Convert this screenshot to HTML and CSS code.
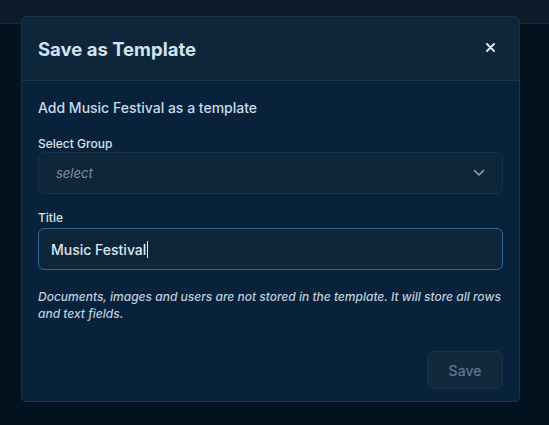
FILE: index.html
```html
<!DOCTYPE html>
<html>
<head>
<meta charset="utf-8">
<link rel="stylesheet" href="styles.css">
</head>
<body>
<div class="topbar"></div>
<div class="stage">
  <div class="modal">
    <div class="modal-header">
      <h2 class="modal-title">Save as Template</h2>
      <button class="close" aria-label="Close">
        <svg width="9" height="9" viewBox="0 0 9 9"><path d="M1 1L8 8M8 1L1 8" stroke="#dbe8f5" stroke-width="2" stroke-linecap="round"/></svg>
      </button>
    </div>
    <div class="modal-body">
      <p class="subtitle">Add Music Festival as a template</p>
      <div class="field">
        <label class="label label-tight">Select Group</label>
        <div class="select">
          <span class="placeholder">select</span>
          <svg class="chevron" width="12" height="8" viewBox="0 0 12 8"><path d="M1.5 1.5L6 6L10.5 1.5" fill="none" stroke="#8ea3b6" stroke-width="1.6" stroke-linecap="round" stroke-linejoin="round"/></svg>
        </div>
      </div>
      <div class="field">
        <label class="label">Title</label>
        <div class="input"><span class="value">Music Festival</span><span class="caret"></span></div>
      </div>
      <p class="help">Documents, images and users are not stored in the template. It will store all rows and text fields.</p>
      <div class="footer">
        <button class="save">Save</button>
      </div>
    </div>
  </div>
</div>
</body>
</html>
```

FILE: styles.css
```css
html, body {
  margin: 0;
  padding: 0;
  height: 100%;
}
body {
  background: #03121f;
  font-family: Inter, "Noto Sans", sans-serif;
  overflow: hidden;
}
.topbar {
  height: 23px;
  background: #0c1b2a;
  border-bottom: 1px solid #172a3b;
}
.stage {
  position: absolute;
  left: 21px;
  top: 16px;
}
.modal {
  width: 497px;
  height: 384px;
  border: 1px solid #1b3347;
  border-radius: 5px;
  background: #07223a;
  overflow: hidden;
  display: flex;
  flex-direction: column;
}
.modal-header {
  height: 63px;
  background: #0d2639;
  border-bottom: 1px solid #1b3549;
  display: flex;
  align-items: center;
  justify-content: space-between;
  padding: 0 24px 0 16px;
}
.modal-title {
  margin: 0;
  font-size: 18.5px;
  font-weight: 700;
  color: #d3e2f0;
}
.close {
  background: none;
  border: 0;
  padding: 0;
  width: 9px;
  height: 9px;
  display: flex;
  cursor: pointer;
  position: relative;
  top: -1px;
}
.modal-body {
  padding: 18px 16px 0 16px;
  display: flex;
  flex-direction: column;
}
.subtitle {
  margin: 0 0 19px 0;
  font-size: 14px;
  font-weight: 500;
  color: #c9d9e8;
  line-height: 18px;
}
.field {
  display: flex;
  flex-direction: column;
  margin-bottom: 15px;
}
.field + .field {
  margin-top: 1px;
}
.label {
  font-size: 12px;
  font-weight: 500;
  color: #d7e3ee;
  line-height: 15px;
  margin-bottom: 3px;
}
.label-tight {
  margin-bottom: 1px;
}
.select, .input {
  height: 40px;
  border-radius: 6px;
  background: #0d2639;
  display: flex;
  align-items: center;
}
.select {
  border: 1px solid #193246;
  padding: 0 17px 0 17px;
  justify-content: space-between;
}
.placeholder {
  font-size: 13px;
  font-style: italic;
  color: #7b90a3;
}
.input {
  border: 1px solid #2a6892;
  padding: 0 12px;
}
.value {
  font-size: 14px;
  font-weight: 500;
  color: #dce8f3;
}
.caret {
  display: inline-block;
  width: 1px;
  height: 17px;
  background: #e6eef6;
  margin-left: 1px;
}
.help {
  margin: 3px 0 0 0;
  font-size: 12px;
  font-style: italic;
  font-weight: 500;
  line-height: 17px;
  color: #bfcfdd;
}
.footer {
  display: flex;
  justify-content: flex-end;
  margin-top: 29px;
}
.save {
  width: 76px;
  height: 38px;
  border-radius: 6px;
  background: #12293d;
  border: 1px solid #1c3346;
  color: #5b7892;
  font-family: Inter, "Noto Sans", sans-serif;
  font-size: 14px;
  font-weight: 500;
  cursor: default;
}
```
